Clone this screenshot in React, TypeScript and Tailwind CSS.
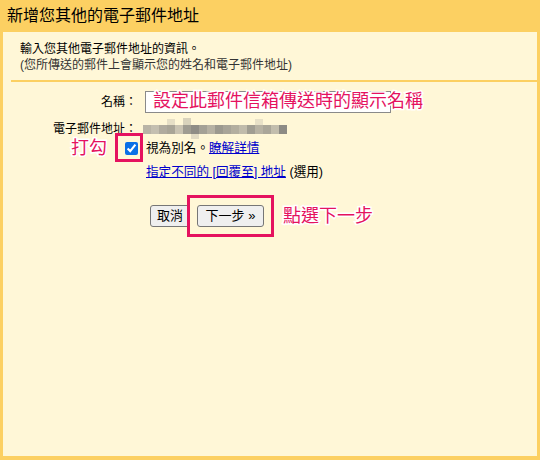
import React from "react";

const mosaic = [
  "bg-[#b9b4a6]", "bg-[#c4bfb0]", "bg-[#b0ab9e]", "bg-[#a9a597]", "bg-[#c9c3b2]",
  "bg-[#9f9c91]", "bg-[#8f8d86]", "bg-[#a4a196]", "bg-[#b6b1a3]", "bg-[#9c998f]",
  "bg-[#a8a498]", "bg-[#b3ae9f]", "bg-[#c0bbab]", "bg-[#a09d92]", "bg-[#b7b2a3]",
  "bg-[#aaa699]", "bg-[#c2bdad]", "bg-[#8d8b85]",
];

function BlurredEmail() {
  return (
    <div className="relative h-[16px] w-[145px]">
      <div className="absolute left-0 top-[4px] flex h-[9px]">
        {mosaic.map((c, i) => (
          <div key={i} className={`h-full w-[8px] ${c}`} />
        ))}
      </div>
      <div className="absolute left-[24px] top-[-2px] h-[6px] w-[8px] bg-[#e6dfc6]" />
      <div className="absolute left-[40px] top-[-3px] h-[7px] w-[8px] bg-[#d9d3bc]" />
      <div className="absolute left-[48px] top-[13px] h-[5px] w-[8px] bg-[#e2dbc3]" />
      <div className="absolute left-[112px] top-[-2px] h-[6px] w-[8px] bg-[#e8e1c8]" />
    </div>
  );
}

export default function App() {
  const pink = "text-[#e5125f] [paint-order:stroke_fill] [-webkit-text-stroke:3px_white]";
  return (
    <div className="flex h-[460px] w-[540px] flex-col bg-[#fcd062] font-['Liberation_Sans','Noto_Sans_CJK_TC',sans-serif] text-[12px] text-black">
      <div className="flex h-[32px] shrink-0 items-center px-[7px] text-[16px]">新增您其他的電子郵件地址</div>
      <div className="mx-[3px] mb-[4px] flex-1 bg-[#fff7d7]">
        <div className="pl-[17px] pt-[9px] leading-[16px]">
          <div>輸入您其他電子郵件地址的資訊。</div>
          <div className="text-[#333]">(您所傳送的郵件上會顯示您的姓名和電子郵件地址)</div>
        </div>
        <div className="ml-[8px] mt-[7px] h-[2px] bg-[#fcd062]" />

        <div className="mt-[9px] grid h-[22px] grid-cols-[134px_1fr] items-center gap-x-[8px]">
          <div className="text-right">名稱：</div>
          <div className="relative h-[22px] w-[246px] border border-[#8a8a8a] bg-white">
            <span className={`absolute left-[7px] top-[-3px] whitespace-nowrap text-[18px] leading-[24px] ${pink}`}>
              設定此郵件信箱傳送時的顯示名稱
            </span>
          </div>
        </div>

        <div className="mt-[7px] grid h-[16px] grid-cols-[134px_1fr] items-center gap-x-[6px]">
          <div className="text-right">電子郵件地址：</div>
          <BlurredEmail />
        </div>

        <div className="mt-[2px] grid h-[20px] grid-cols-[134px_1fr] items-center gap-x-[8px]">
          <div className="flex items-center justify-end gap-[18px]">
            <span className={`text-[18px] leading-[20px] ${pink}`}>打勾</span>
            <span className="relative mr-[-1px] flex h-[13px] w-[13px] items-center">
              <input type="checkbox" defaultChecked className="m-0 h-[13px] w-[13px] accent-[#0b6fe6]" />
              <span className="absolute left-[-10px] top-[-9px] h-[29px] w-[28px] border-[3px] border-[#e5125f]" />
            </span>
          </div>
          <div className="pl-[1px] text-[12.6px]">
            視為別名。<span className="text-[#0000cc] underline">瞭解詳情</span>
          </div>
        </div>

        <div className="mt-[5px] grid h-[16px] grid-cols-[134px_1fr] items-center gap-x-[8px]">
          <div className="col-start-2 pl-[1px] text-[12.6px]">
            <span className="text-[#0000cc] underline">指定不同的 [回覆至] 地址</span> (選用)
          </div>
        </div>

        <div className="mt-[26px] grid grid-cols-[134px_1fr] items-center gap-x-[8px]">
          <div className="col-start-2 flex items-center pl-[5px]">
            <button className="h-[22px] w-[40px] rounded-[3px] border border-[#767676] bg-[#efefef] text-[13px] leading-[20px]">
              取消
            </button>
            <span className="relative ml-[7px] flex">
              <button className="h-[22px] w-[67px] rounded-[3px] border border-[#767676] bg-[#efefef] text-[13px] leading-[20px]">
                下一步 »
              </button>
              <span className="absolute inset-[-10px] border-[3px] border-[#e5125f]" />
            </span>
            <span className={`ml-[19px] text-[18px] leading-[22px] ${pink}`}>點選下一步</span>
          </div>
        </div>
      </div>
    </div>
  );
}
